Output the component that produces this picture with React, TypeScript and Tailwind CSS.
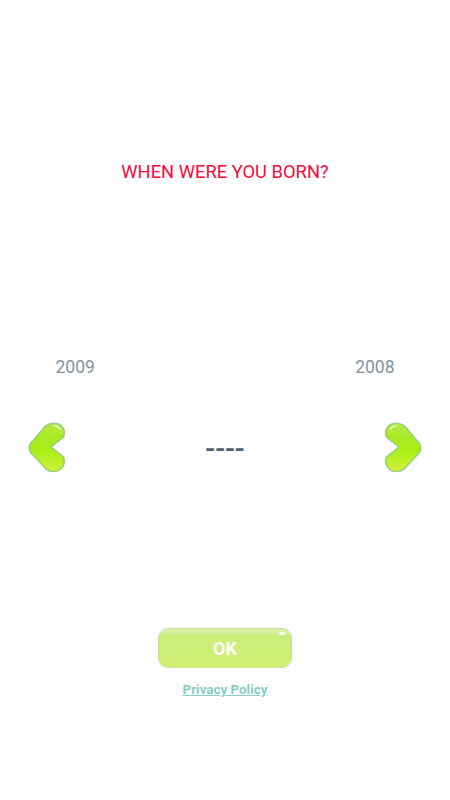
import React from "react";

const SHAPE =
  "M17.5 4 L2.5 21.5 Q-0.5 26.5 3 31 L18 47 Q23.5 51 30.5 48.5 Q38.5 43.5 35.5 35 L24 26 Q23 25 24 24 L35.5 15 Q38.5 7.5 31.5 2.5 Q24 -0.5 17.5 4 Z";

function Arrow({ right, id }: { right?: boolean; id: string }) {
  return (
    <svg width="38" height="51" viewBox="0 0 38 51" className="block">
      <defs>
        <linearGradient id={id} x1="0" y1="0" x2="0" y2="1">
          <stop offset="0" stopColor="#b8ea48" />
          <stop offset="0.3" stopColor="#a8ea20" />
          <stop offset="0.55" stopColor="#a8ee14" />
          <stop offset="1" stopColor="#d0f238" />
        </linearGradient>
      </defs>
      <g transform={right ? "translate(38 0) scale(-1 1)" : undefined}>
        <path d={SHAPE} fill={`url(#${id})`} stroke="#98d27c" strokeWidth="1.6" strokeLinejoin="round" />
      </g>
      {right ? (
        <path d="M5 8.5 C6 4.5 10 3 14 3.5 C11 4.5 8 6 5 8.5Z" fill="#ffffff" opacity="0.9" />
      ) : (
        <path d="M24 3.5 C28 2.5 32 4.5 33.5 8.5 C30.5 6 27.5 4.5 24 3.5Z" fill="#ffffff" opacity="0.9" />
      )}
    </svg>
  );
}

export default function App() {
  return (
    <div className="flex h-[800px] w-[450px] flex-col items-stretch bg-white font-['Roboto',sans-serif]">
      <h1 className="mt-[160px] h-[24px] text-center text-[18.35px] leading-[24px] font-normal text-[#f80a3a]">
        WHEN WERE YOU BORN?
      </h1>
      <div className="mt-[171px] flex h-[24px] justify-between px-[55.5px] text-[17.5px] leading-[24px] text-[#84949f]">
        <span>2009</span>
        <span>2008</span>
      </div>
      <div className="mt-[43px] flex h-[51px] items-center justify-between px-[28px]">
        <Arrow id="arrow-left" />
        <span className="pt-[3px] text-[29px] leading-[48px] font-medium text-[#4d6272]">----</span>
        <Arrow id="arrow-right" right />
      </div>
      <div className="mt-[155px] flex justify-center">
        <button className="relative flex h-[40px] w-[134px] items-center justify-center overflow-hidden rounded-[10px] border border-[#c8e2a2] bg-gradient-to-b from-[#d6efa2] from-[12%] via-[#cbee7c] via-[14%] to-[#d0ef72] pt-[1px] text-[18px] font-bold text-white">
          OK
          <span className="absolute top-[3px] right-[6px] h-[3px] w-[6px] rounded-full bg-white" />
        </button>
      </div>
      <a className="mt-[13px] text-center text-[13.4px] leading-[18px] font-bold text-[#85cfc0] underline">
        Privacy Policy
      </a>
    </div>
  );
}
